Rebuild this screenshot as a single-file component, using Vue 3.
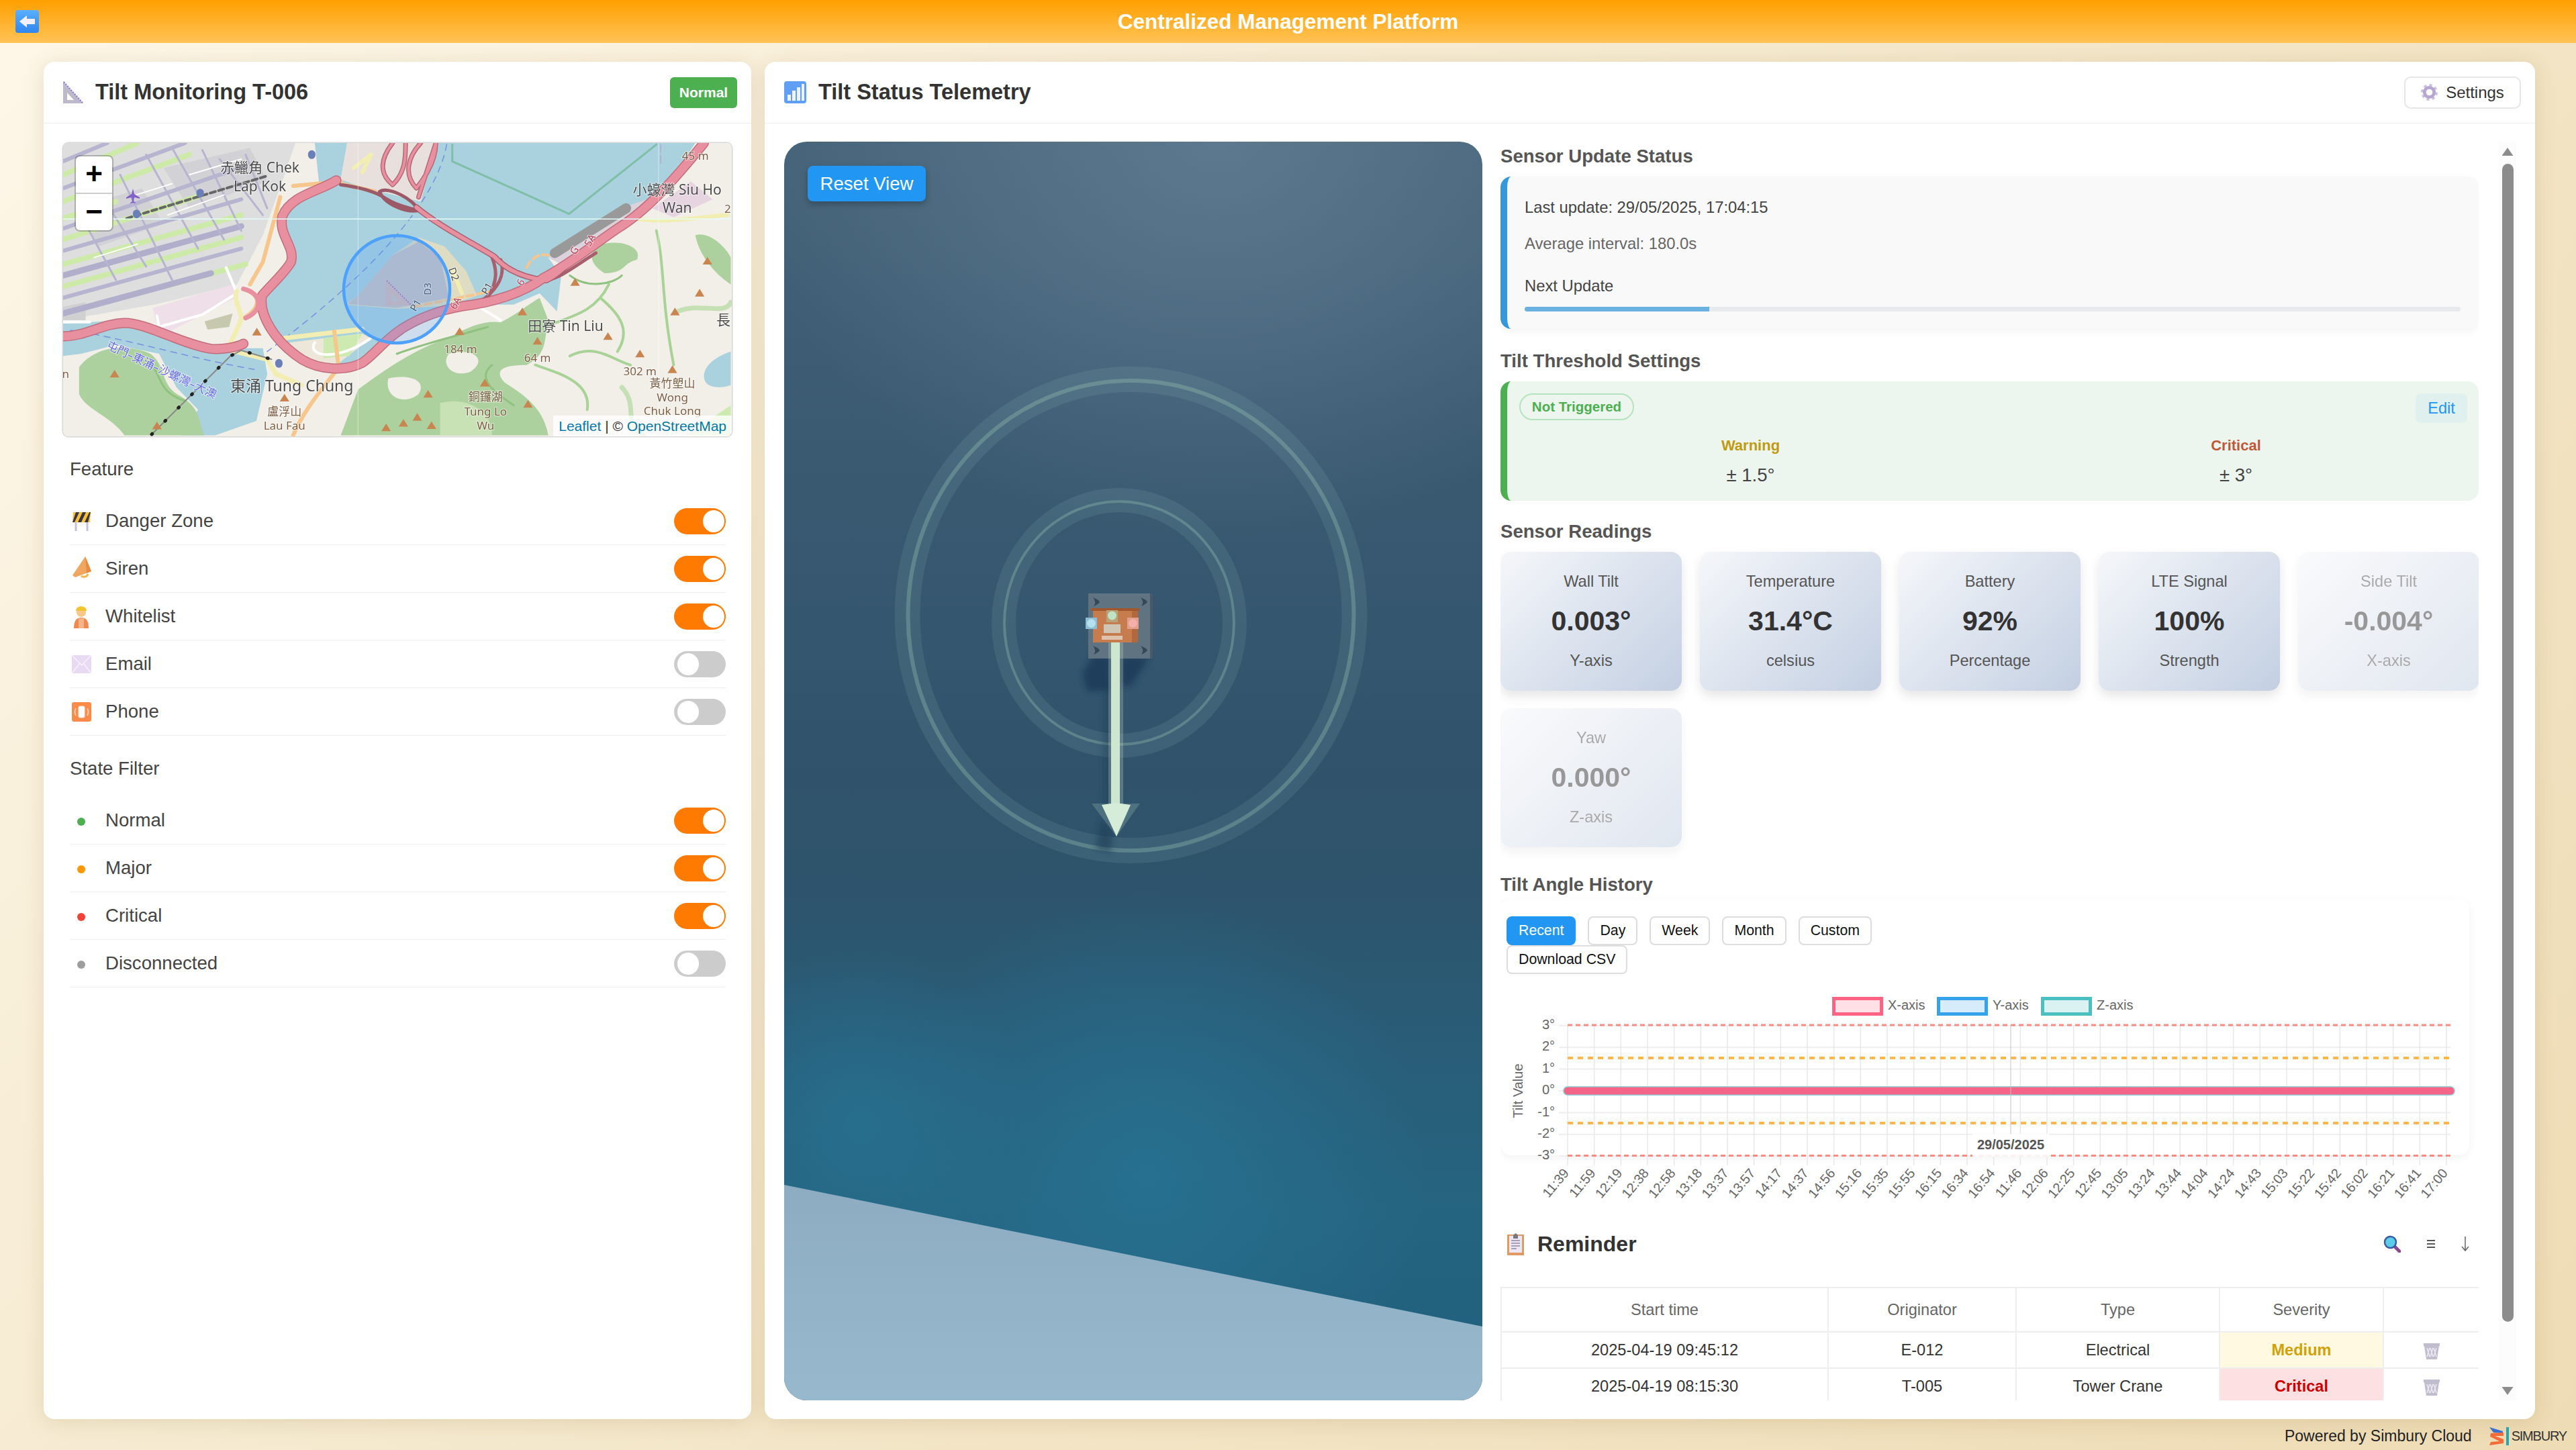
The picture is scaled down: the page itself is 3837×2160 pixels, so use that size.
<template>
  <div class="page">
    <header class="topbar">
      <button class="back-btn">
        <svg viewBox="0 0 35 34" width="35" height="34">
          <defs>
            <linearGradient id="backFill" x1="0" y1="0" x2="0" y2="1">
              <stop offset="0" stop-color="#5aaeff" />
              <stop offset="1" stop-color="#2f86ee" />
            </linearGradient>
          </defs>
          <rect width="35" height="34" rx="4" fill="url(#backFill)" />
          <path d="M6 17 L17 8 V13 H29 V21 H17 V26 Z" fill="#f2f0ff" />
        </svg>
      </button>
      <div class="topbar-title">Centralized Management Platform</div>
      <div></div>
    </header>

    <main class="main">
      <!-- left: site overview -->
      <section class="card left-card">
        <div class="card-head">
          <svg class="head-icon" viewBox="0 0 30 33" width="30" height="33">
            <path d="M0 0 L30 33 H0 Z M6 17 V28 H16 Z" fill="#bdb9cb" fill-rule="evenodd" />
            <path d="M1 1 L29 32" stroke="#8d70d8" stroke-width="2" stroke-dasharray="2 2" />
          </svg>
          <h2 class="card-title">Tilt Monitoring T-006</h2>
          <span class="status-badge">Normal</span>
        </div>
        <div class="left-body">
          <div class="map">
            <svg class="map-svg" viewBox="0 0 996 437" preserveAspectRatio="none">
              <rect width="996" height="437" fill="#f2efe9" />
              <g class="map-shapes" transform="scale(0.6441 0.3333) translate(-8 -8)">
                <path v-for="(s, i) in mapFills" :key="'f' + i" :d="s.d" :fill="s.c" />
                <path v-for="(s, i) in mapLines" :key="'l' + i" :d="s.d" fill="none" :stroke="s.c" :stroke-width="s.w"
                  :stroke-dasharray="s.dash" stroke-linecap="round" stroke-linejoin="round" />
                <path v-for="p in mapPeaks" :key="p[0] + '-' + p[1]"
                  :d="`M${p[0]},${p[1] - 18} l11,34 h-22 Z`" fill="#c9854f" />
                <path d="M8,348 H1552" stroke="#e6fbfb" stroke-width="1.5" />
                <path d="M690,8 V1315 M1385,8 V1315" stroke="#ffffff" stroke-opacity="0.5" stroke-width="1" />
              </g>
              <!-- plane -->
              <path d="M104 68 l2 8 8 5 v2 l-8 -2 -1 6 3 2 v1 l-4 -1 -4 1 v-1 l3 -2 -1 -6 -8 2 v-2 l8 -5 z" fill="#8461c9" />
              <text v-for="t in mapLabels" :key="t.text + t.x" class="map-label" :x="t.x" :y="t.y" :fill="t.c"
                :font-size="t.s" :transform="t.r ? `rotate(${t.r} ${t.x} ${t.y})` : null" text-anchor="middle"
                dominant-baseline="middle">{{ t.text }}</text>
              <ellipse cx="497" cy="218" rx="79" ry="80" fill="#3f97ff" fill-opacity="0.2" stroke="#4ea1fb"
                stroke-width="4.5" />
              <g transform="translate(481 204)">
                <path d="M0 0 L38 38 H0 Z M8 20 V32 H19 Z" fill="#b7b3c4" fill-opacity="0.9" fill-rule="evenodd" />
                <path d="M1 1 L37 37" stroke="#8d70d8" stroke-width="1.5" stroke-dasharray="2 2" />
              </g>
            </svg>
            <div class="zoom-ctl">
              <div class="zoom-btn">+</div>
              <div class="zoom-btn">−</div>
            </div>
            <div class="attribution"><span>Leaflet</span> | © <span>OpenStreetMap</span></div>
          </div>

          <h3 class="group-title">Feature</h3>
          <div v-for="f in features" :key="f.name" class="row">
            <span class="row-icon">
              <svg v-if="f.icon === 'zone'" viewBox="0 0 29 30" width="29" height="30">
                <path d="M6 16 V30 M23 16 V30" stroke="#c7bfdc" stroke-width="3" />
                <path d="M2 2 H28 L27 17 H1 Z" fill="#f5c23a" />
                <path d="M6 2 H11 L4 17 H1 Z M16 2 H21 L14 17 H9 Z M26 2 H28 L24 17 H19 Z" fill="#3b3346" />
              </svg>
              <svg v-else-if="f.icon === 'siren'" viewBox="0 0 29 36" width="29" height="36">
                <path d="M20 0 L29 22 L5 31 L1 28 Z" fill="#f0a560" />
                <path d="M20 0 L29 22 L22 25 Z" fill="#e58b42" />
                <path d="M14 29 a6 5 0 0 0 10 -3" fill="none" stroke="#f3b64e" stroke-width="3" />
              </svg>
              <svg v-else-if="f.icon === 'worker'" viewBox="0 0 26 36" width="26" height="36">
                <path d="M2 36 C2 24 6 20 13 20 C20 20 24 24 24 36 Z" fill="#f3884f" />
                <path d="M9 21 H17 V36 H9 Z" fill="#f6b38a" />
                <circle cx="13" cy="12" r="7" fill="#f7c889" />
                <path d="M5 10 C5 1 21 1 21 10 Z" fill="#f2c430" />
              </svg>
              <svg v-else-if="f.icon === 'mail'" viewBox="0 0 29 27" width="29" height="27">
                <rect width="29" height="27" fill="#e7daf2" />
                <path d="M0 0 L14.5 15 L29 0 M0 27 L12 12 M29 27 L17 12" fill="none" stroke="#f7f2fb" stroke-width="1.5" />
              </svg>
              <svg v-else viewBox="0 0 29 29" width="29" height="29">
                <rect width="29" height="29" rx="3" fill="#fb8b4a" />
                <rect x="10" y="6" width="9" height="17" rx="2" fill="#fff" stroke="#fde2cf" />
                <path d="M6 9 Q3 14.500 6 20 M23 9 Q26 14.500 23 20" fill="none" stroke="#fde2cf" stroke-width="1.500" />
              </svg>
            </span>
            <span class="row-name">{{ f.name }}</span>
            <span class="toggle" :class="{ on: f.on }"><i class="knob"></i></span>
          </div>

          <h3 class="group-title">State Filter</h3>
          <div v-for="s in states" :key="s.name" class="row">
            <span class="row-icon"><i class="dot" :style="{ background: s.color }"></i></span>
            <span class="row-name">{{ s.name }}</span>
            <span class="toggle" :class="{ on: s.on }"><i class="knob"></i></span>
          </div>
        </div>
      </section>

      <!-- right: telemetry -->
      <section class="card right-card">
        <div class="card-head">
          <svg class="head-icon" viewBox="0 0 33 33" width="33" height="33">
            <rect width="33" height="33" rx="4" fill="#5f9ff5" />
            <path d="M5 20 h5 v9 h-5z M12 14 h5 v15 h-5z M19 9 h5 v20 h-5z M26 4 h4 v25 h-4z" fill="#eef3ff" />
          </svg>
          <h2 class="card-title">Tilt Status Telemetry</h2>
          <button class="settings-btn">
            <svg viewBox="0 0 26 26" width="25" height="25">
              <circle cx="13" cy="13" r="10.500" fill="none" stroke="#cbbfe0" stroke-width="5" stroke-dasharray="4 4.200" />
              <circle cx="13" cy="13" r="7.500" fill="none" stroke="#b5a6d2" stroke-width="5" />
              <circle cx="13" cy="13" r="3.500" fill="#fff" />
            </svg>
            Settings
          </button>
        </div>

        <div class="right-body">
          <div class="viz">
            <svg class="viz-svg" viewBox="1168 211 1040 1875" preserveAspectRatio="none">
              <defs>
                <linearGradient id="floorFill" x1="0" y1="0" x2="0" y2="1">
                  <stop offset="0" stop-color="#8dacc2" />
                  <stop offset="1" stop-color="#97b8cd" />
                </linearGradient>
                <filter id="soft" x="-50%" y="-50%" width="200%" height="200%">
                  <feGaussianBlur stdDeviation="5" />
                </filter>
              </defs>
              <polygon points="1168,1765 2208,1976 2208,2086 1168,2086" fill="url(#floorFill)" />

              <ellipse cx="1684.500" cy="916" rx="333" ry="351" fill="none" stroke="#9cc4c4" stroke-opacity="0.13" stroke-width="38" />
              <ellipse cx="1684.500" cy="917" rx="332" ry="350" fill="none" stroke="#a7d2bb" stroke-opacity="0.3" stroke-width="6" />
              <ellipse cx="1667" cy="928" rx="172" ry="183" fill="none" stroke="#9cc4c4" stroke-opacity="0.13" stroke-width="36" />
              <ellipse cx="1667" cy="928" rx="171" ry="181" fill="none" stroke="#a7d2bb" stroke-opacity="0.3" stroke-width="4" />

              <g fill="#1a3a55" fill-opacity="0.8" filter="url(#soft)">
                <path d="M1628 975 L1612 1005 L1620 1030 L1655 1028 L1655 975 Z" />
                <path d="M1670 978 H1712 L1685 1022 H1670 Z" />
                <rect x="1645" y="1020" width="10" height="190" fill-opacity="0.45" />
                <path d="M1640 1220 L1658 1235 L1655 1270 L1632 1265 Z" fill-opacity="0.6" />
              </g>

              <rect x="1621" y="884" width="92" height="97" fill="#5f7480" />
              <rect x="1713" y="884" width="4" height="97" fill="#47586a" />
              <path v-for="b in bolts" :key="b[0] + '' + b[1]" :transform="`translate(${b[0]} ${b[1]})`"
                d="M0 0 Q10 4 10 7 Q8 10 1 13 Q6 7 0 0 Z" fill="#35485a" />

              <rect x="1628" y="907" width="67" height="50" fill="#c67c4c" />
              <rect x="1686" y="907" width="9" height="50" fill="#b2683b" />
              <rect x="1625" y="906" width="72" height="4" fill="#a2562c" />
              <rect x="1648" y="909" width="17" height="18" fill="#b8a37a" />
              <circle cx="1656.500" cy="917" r="6.500" fill="#bfe3c3" />
              <rect x="1617" y="920" width="17" height="17" fill="#8ebdd4" />
              <circle cx="1625.500" cy="928.500" r="6.500" fill="#b5e0f0" />
              <rect x="1679" y="920" width="17" height="17" fill="#e0a08c" />
              <circle cx="1687.500" cy="928.500" r="6.500" fill="#f2b0a8" />
              <rect x="1644" y="930" width="25" height="13" fill="#cfc6b6" />
              <rect x="1641" y="947" width="31" height="6" fill="#dfc3aa" />

              <rect x="1651" y="957" width="22" height="243" fill="#cfe9d3" fill-opacity="0.25" />
              <rect x="1655" y="957" width="13" height="243" fill="#cde6d0" />
              <polygon points="1626,1197 1698,1197 1663,1246" fill="#cfe9d3" fill-opacity="0.2" />
              <polygon points="1641,1199 1662,1196 1684,1199 1663,1246" fill="#d5ecd8" />
            </svg>
            <button class="reset-btn">Reset View</button>
          </div>

          <div class="details">
            <h3 class="sec-title first">Sensor Update Status</h3>
            <div class="status-box">
              <div class="status-line dark">Last update: 29/05/2025, 17:04:15</div>
              <div class="status-line">Average interval: 180.0s</div>
              <div class="status-line dark next">Next Update</div>
              <div class="progress"><div class="progress-fill" :style="{ width: progress + '%' }"></div></div>
            </div>

            <h3 class="sec-title">Tilt Threshold Settings</h3>
            <div class="threshold-box">
              <div class="threshold-head">
                <span class="trigger-badge">Not Triggered</span>
                <button class="edit-btn">Edit</button>
              </div>
              <div class="threshold-cols">
                <div v-for="t in thresholds" :key="t.label" class="threshold-col">
                  <div class="threshold-label" :style="{ color: t.color }">{{ t.label }}</div>
                  <div class="threshold-value">{{ t.value }}</div>
                </div>
              </div>
            </div>

            <h3 class="sec-title readings-title">Sensor Readings</h3>
            <div class="readings">
              <div v-for="r in readings" :key="r.label" class="reading" :class="{ dim: r.dim }">
                <div class="reading-label">{{ r.label }}</div>
                <div class="reading-value">{{ r.value }}</div>
                <div class="reading-sub">{{ r.sub }}</div>
              </div>
            </div>

            <h3 class="sec-title history">Tilt Angle History</h3>
            <div class="chart-box">
              <div class="range-btns">
                <button v-for="b in ranges" :key="b" class="range-btn" :class="{ active: b === 'Recent' }">{{ b }}</button>
              </div>
              <svg class="chart" viewBox="2235 1470 1443 340" width="1443" height="340">
                <g v-for="l in legend" :key="l.text">
                  <rect :x="l.x + 2.500" y="1484.500" width="71" height="23" :fill="l.fill" :stroke="l.color" stroke-width="5" />
                  <text class="legend-text" :x="l.x + 83" y="1496" dominant-baseline="middle">{{ l.text }}</text>
                </g>
                <line v-for="y in yTicks" :key="'g' + y.v" x1="2322" x2="3650" :y1="y.y" :y2="y.y" stroke="#eeeeee" stroke-width="2" />
                <line v-for="t in xTicks" :key="'v' + t.label + t.x" :x1="t.x" :x2="t.x" y1="1524" y2="1733" stroke="#e8e8e8" stroke-width="1.500" />
                <text v-for="y in yTicks" :key="'y' + y.v" class="tick" x="2316" :y="y.y" text-anchor="end" dominant-baseline="middle">{{ y.v }}°</text>
                <text v-for="t in xTicks" :key="'x' + t.label + t.x" class="tick" :x="t.x + 3" y="1745" text-anchor="end"
                  :transform="`rotate(-50 ${t.x + 3} 1745)`">{{ t.label }}</text>
                <text class="axis-title" transform="translate(2268 1622) rotate(-90)" text-anchor="middle">Tilt Value</text>

                <line v-for="y in [1524, 1718.500]" :key="y" x1="2335" x2="3650" :y1="y" :y2="y" stroke="#ff8a80" stroke-width="3" stroke-dasharray="7 5" />
                <line v-for="y in [1573, 1670]" :key="y" x1="2335" x2="3650" :y1="y" :y2="y" stroke="#ffb74d" stroke-width="4" stroke-dasharray="8 7" />

                <line x1="2335" x2="3650" y1="1622" y2="1622" stroke="#8fd3d8" stroke-width="14" stroke-linecap="round" />
                <line x1="2335" x2="3650" y1="1622" y2="1622" stroke="#f7648a" stroke-width="11" stroke-linecap="round" />
                <line x1="2995" x2="2995" y1="1524" y2="1690" stroke="#c4c4c4" stroke-width="1" />

                <rect x="2938" y="1686" width="114" height="34" fill="#ffffff" fill-opacity="0.88" />
                <text class="date-tag" x="2995" y="1704" text-anchor="middle" dominant-baseline="middle">29/05/2025</text>
              </svg>
            </div>

            <div class="reminder-head">
              <svg viewBox="0 0 25 33" width="25" height="33">
                <rect y="2" width="25" height="31" fill="#e09a64" />
                <rect x="3" y="4" width="19" height="25" fill="#ece6f5" />
                <path d="M6 11 H19 M6 15 H19 M6 19 H19 M6 23 H14" stroke="#8f8aa0" stroke-width="1.500" />
                <path d="M9 8 V3 L12.500 0 L16 3 V8 Z" fill="#777780" />
              </svg>
              <h2 class="reminder-title">Reminder</h2>
              <div class="reminder-tools">
                <svg viewBox="0 0 26 26" width="26" height="26">
                  <path d="M16 16 L24 24" stroke="#8a4a90" stroke-width="5" stroke-linecap="round" />
                  <circle cx="10.500" cy="10.500" r="8.500" fill="#5bcdea" stroke="#3a5ca0" stroke-width="2.500" />
                </svg>
                <svg viewBox="0 0 14 14" width="14" height="14">
                  <path d="M1 2 H13 M1 7 H13 M1 12 H13" stroke="#555555" stroke-width="2" />
                </svg>
                <svg viewBox="0 0 12 24" width="12" height="24">
                  <path d="M6 1 V22 M1 16 L6 22 L11 16" fill="none" stroke="#666666" stroke-width="1.500" />
                </svg>
              </div>
            </div>

            <table class="reminder-table">
              <colgroup>
                <col v-for="w in colWidths" :key="w" :style="{ width: w + 'px' }" />
              </colgroup>
              <thead>
                <tr>
                  <th v-for="h in tableHead" :key="h">{{ h }}</th>
                </tr>
              </thead>
              <tbody>
                <tr v-for="r in reminders" :key="r.time">
                  <td>{{ r.time }}</td>
                  <td>{{ r.origin }}</td>
                  <td>{{ r.type }}</td>
                  <td class="sev" :class="r.severity.toLowerCase()">{{ r.severity }}</td>
                  <td>
                    <svg class="bin" viewBox="0 0 26 24" width="26" height="24">
                      <path d="M1 0 H25 V4 H24 L21 24 H5 L2 4 H1 Z" fill="#c1bdce" />
                      <path d="M6 7 L10 20 M11 7 L15 20 M16 7 L20 20 M20 7 L16 20 M15 7 L11 20 M10 7 L6 20" stroke="#ebe9f1" stroke-width="1.500" />
                    </svg>
                  </td>
                </tr>
              </tbody>
            </table>
          </div>

          <div class="scrollbar">
            <i class="arrow up"></i>
            <div class="thumb"></div>
            <i class="arrow down"></i>
          </div>
        </div>
      </section>
    </main>

    <footer class="footer">
      <span>Powered by Simbury Cloud</span>
      <svg viewBox="0 0 29 27" width="29" height="27">
        <path d="M0 0 L20 6 L20 9 L6 8 Z" fill="#3b6fd0" />
        <path d="M2 9 L21 8 L21 13 L8 13 L21 18 L21 24 L0 27 L2 22 L15 21 L1 14 Z" fill="#f26b38" />
        <rect x="25" y="0" width="4" height="27" fill="#22a7b5" />
      </svg>
      <span class="brand">SIMBURY</span>
    </footer>
  </div>
</template>

<script setup>
const features = [
  { name: 'Danger Zone', icon: 'zone', on: true },
  { name: 'Siren', icon: 'siren', on: true },
  { name: 'Whitelist', icon: 'worker', on: true },
  { name: 'Email', icon: 'mail', on: false },
  { name: 'Phone', icon: 'phone', on: false }
]

const states = [
  { name: 'Normal', color: '#4caf50', on: true },
  { name: 'Major', color: '#ff9800', on: true },
  { name: 'Critical', color: '#f44336', on: true },
  { name: 'Disconnected', color: '#9e9e9e', on: false }
]

const progress = 19.7

const thresholds = [
  { label: 'Warning', value: '± 1.5°', color: '#c09a10' },
  { label: 'Critical', value: '± 3°', color: '#c0573a' }
]

const readings = [
  { label: 'Wall Tilt', value: '0.003°', sub: 'Y-axis' },
  { label: 'Temperature', value: '31.4°C', sub: 'celsius' },
  { label: 'Battery', value: '92%', sub: 'Percentage' },
  { label: 'LTE Signal', value: '100%', sub: 'Strength' },
  { label: 'Side Tilt', value: '-0.004°', sub: 'X-axis', dim: true },
  { label: 'Yaw', value: '0.000°', sub: 'Z-axis', dim: true }
]

const ranges = ['Recent', 'Day', 'Week', 'Month', 'Custom', 'Download CSV']

const legend = [
  { text: 'X-axis', x: 2729, color: '#ff6384', fill: '#ffe0e6' },
  { text: 'Y-axis', x: 2885, color: '#36a2eb', fill: '#d7ecfb' },
  { text: 'Z-axis', x: 3040, color: '#4bc0c0', fill: '#dbf2f2' }
]

// chart scale: 32.4px per degree, zero at y=1622
const yTicks = [3, 2, 1, 0, -1, -2, -3].map(v => ({ v, y: 1622 - v * 32.4 }))

const timeLabels = ['11:39', '11:59', '12:19', '12:38', '12:58', '13:18', '13:37', '13:57', '14:17', '14:37', '14:56', '15:16',
  '15:35', '15:55', '16:15', '16:34', '16:54', '11:46', '12:06', '12:25', '12:45', '13:05', '13:24', '13:44', '14:04', '14:24',
  '14:43', '15:03', '15:22', '15:42', '16:02', '16:21', '16:41', '17:00']
const xTicks = timeLabels.map((label, i) => ({ label, x: 2335 + i * (3644 - 2335) / 33 }))

const tableHead = ['Start time', 'Originator', 'Type', 'Severity', '']
const colWidths = [487, 280, 303, 244, 143]
const reminders = [
  { time: '2025-04-19 09:45:12', origin: 'E-012', type: 'Electrical', severity: 'Medium' },
  { time: '2025-04-19 08:15:30', origin: 'T-005', type: 'Tower Crane', severity: 'Critical' }
]

const bolts = [[1628, 890], [1699, 890], [1628, 962], [1699, 962]]

// map shapes, traced in a 1552x1315 space and scaled down by the group transform
const water = '#a9d1de'
const ringRoad = 'M640,175 C600,225 535,240 515,335 C505,420 545,470 535,540 C520,590 490,640 468,690 C460,780 500,900 560,975 C600,1022 660,1030 700,990 C730,950 745,900 790,840 C830,790 880,755 930,738 C1000,722 1070,680 1120,610 C1170,560 1230,470 1290,390 C1350,320 1410,200 1490,8'
const westRoad = 'M8,872 C60,872 100,815 150,812 C200,812 280,905 350,928 C380,932 410,920 425,905'
const bridge = 'M825,295 C870,370 950,450 1005,515 C1030,570 1070,610 1125,622 C1150,600 1170,560 1190,520'

const mapFills = [
  { c: water, d: 'M590,8 L665,8 L650,170 L700,205 L835,270 L870,8 L1470,8 L1390,240 L1300,300 L1200,430 L1130,520 L1160,600 L1150,760 L1110,680 L1050,730 L970,730 L900,740 L830,780 L745,890 L700,980 L640,1020 L570,980 L500,880 L470,780 L460,690 L500,650 L545,520 L510,430 L510,330 L540,250 L600,190 Z' },
  { c: water, d: 'M8,815 L150,800 L350,925 L470,925 L480,1040 L455,1250 L360,1315 L280,1315 L320,1200 L270,1100 L230,950 L130,910 L50,950 L8,960 Z' },
  { c: water, d: 'M1552,940 L1552,1090 C1520,1110 1490,1100 1490,1050 C1490,1000 1520,960 1552,940 Z' },
  { c: '#dededf', d: 'M8,8 L545,8 L520,150 L470,420 L410,640 L220,730 L8,800 Z' },
  { c: '#d2d2d6', d: 'M240,120 L440,30 L480,180 L300,300 Z' },
  { c: '#d2d2d6', d: 'M40,300 L190,210 L240,370 L90,470 Z' },
  { c: '#efdfe8', d: 'M215,745 L400,640 L412,695 L245,860 L222,800 Z' },
  { c: '#c6c9ae', d: 'M335,805 L400,770 L392,830 L342,842 Z' },
  { c: '#d0cfd2', d: 'M8,740 L60,720 L60,800 L8,800 Z' },
  { c: '#e8e0dc', d: 'M665,8 L870,8 L835,270 L700,205 L650,170 Z' },
  { c: '#dedcc2', d: 'M830,430 L890,470 L940,580 L965,690 L900,735 L780,750 L660,730 L690,690 L770,510 Z' },
  { c: '#c7c4c6', d: 'M770,510 L830,450 L880,520 L900,700 L780,745 L665,728 L690,690 Z' },
  { c: '#dcd2dc', d: 'M1130,520 L1300,300 L1400,230 L1350,320 L1290,390 L1170,560 Z' },
  { c: '#e6d5e0', d: 'M1370,300 L1460,180 L1510,260 L1420,340 Z' },
  { c: '#add19e', d: 'M45,1010 C80,920 150,900 210,950 C250,1010 230,1090 280,1140 C330,1200 320,1260 335,1315 L150,1315 C120,1230 60,1200 45,1130 Z' },
  { c: '#add19e', d: 'M690,1110 C760,1010 830,920 900,880 C950,820 990,800 1020,810 C1060,770 1090,720 1110,700 L1130,800 C1120,880 1130,950 1080,1000 C1030,1000 1000,1020 1030,1080 C1080,1140 1120,1200 1130,1315 L650,1315 Z' },
  { c: '#f2efe9', d: 'M760,1060 C810,1040 850,1070 830,1130 C800,1180 750,1150 760,1060 Z' },
  { c: '#f2efe9', d: 'M900,950 C960,920 990,980 950,1030 C910,1060 880,1000 900,950 Z' },
  { c: '#c8e2b6', d: 'M880,1170 C940,1140 1000,1200 1000,1315 L880,1315 Z' },
  { c: '#add19e', d: 'M1240,470 C1290,430 1350,470 1335,530 C1300,545 1310,590 1260,590 C1235,560 1220,520 1240,470 Z' },
  { c: '#add19e', d: 'M1470,420 C1500,400 1540,470 1552,520 L1552,640 C1520,600 1480,520 1470,420 Z' },
  { c: '#cdebb0', d: 'M1450,1315 L1552,1180 L1552,1315 Z' },
  { c: '#ece7d9', d: 'M530,900 L700,860 L720,880 L640,1000 L560,970 Z' },
  { c: '#cdebb0', d: 'M610,880 L700,860 L670,960 L610,970 Z' }
]

const mapLines = [
  // airport aprons and taxiways
  { c: '#cdeaa9', w: 8, d: 'M8,150 L180,8 M8,270 L300,60 M8,440 L330,240 M8,550 L420,330 M8,650 L420,430 M8,345 L130,270 M260,640 L430,550' },
  { c: '#b6b4cf', w: 6, d: 'M8,90 L110,8 M8,210 L290,8 M8,390 L430,110 M8,490 L420,260 M8,700 L420,480' },
  { c: '#b0aecb', w: 9, d: 'M8,600 L420,380 M8,770 L350,590' },
  { c: '#b6b4cf', w: 3, d: 'M200,60 L320,480 M330,40 L420,400 M90,220 L200,560 M430,60 L480,300 M140,150 L260,620 M260,30 L380,440 M40,300 L130,620 M370,80 L470,330' },
  { c: '#ffffff', w: 2, d: 'M160,250 L260,190 M250,330 L380,240 M300,150 L420,80 M80,520 L180,460' },
  { c: '#666666', w: 4, dash: '8 5', d: 'M155,345 L480,155' },
  // ferries and boundaries
  { c: '#7a8fe0', w: 1.5, dash: '9 8', d: 'M895,15 C880,180 800,480 480,940' },
  { c: '#7a8fe0', w: 1.5, dash: '9 8', d: 'M25,845 C150,880 300,970 450,1020' },
  { c: '#7fbfa8', w: 3, d: 'M908,15 L908,90 L1178,325 L1380,15' },
  { c: '#b6a9cf', w: 1.5, dash: '12 4', d: 'M1390,15 V110' },
  // contour greens
  { c: '#a9d296', w: 4, d: 'M1380,400 C1400,560 1390,700 1420,1000 M1250,700 C1300,780 1320,850 1290,940 M1100,1000 C1160,1040 1230,1080 1220,1200 M1120,830 C1190,780 1240,760 1270,640 M1180,960 C1240,900 1280,980 1320,1000' },
  { c: '#8fc27f', w: 3, d: 'M200,980 C240,1030 220,1120 290,1160 M780,950 C850,900 920,870 990,830 M1000,1000 C960,1060 1010,1130 1050,1180 M1180,600 C1220,660 1280,640 1300,600' },
  { c: '#c5e0b4', w: 7, d: 'M1430,760 C1480,720 1540,780 1552,720 M1300,1100 C1340,1180 1300,1260 1350,1315' },
  { c: '#999999', w: 15, d: 'M1145,500 L1310,300' },
  // service roads
  { c: '#ffffff', w: 4, d: 'M385,565 L410,680 L330,775 L230,830 L225,780 M8,808 L70,808 M590,900 C570,960 640,990 720,880 M965,735 L1020,800' },
  { c: '#f2eeb2', w: 7, d: 'M520,880 L700,840 M410,670 C400,700 420,760 420,790 C415,830 400,880 390,920 M395,935 L480,975 L500,1040 L560,1090' },
  { c: '#f2eeb2', w: 6, d: 'M1330,345 C1400,370 1470,340 1545,330 M910,580 L930,680 M680,120 L720,60 L700,140' },
  { c: '#f7c68c', w: 6, d: 'M635,850 L645,1010 C620,1080 570,1180 540,1315 M510,250 L470,540 L440,640 M430,665 C470,690 460,750 430,785 M540,200 L650,180 M650,190 L730,225' },
  { c: '#f7c68c', w: 4, dash: '10 6', d: 'M820,740 L1000,670 M1080,565 C1090,520 1110,500 1130,510' },
  // motorways: casing then fill
  { c: '#c26d7d', w: 15, d: ringRoad },
  { c: '#c26d7d', w: 15, d: westRoad },
  { c: '#a8606e', w: 9, d: bridge },
  { c: '#a8606e', w: 5, d: 'M1000,520 C1010,570 1015,620 990,700 M1020,530 C1030,590 1020,650 975,715 M1125,622 C1160,610 1190,560 1240,500' },
  { c: '#b56878', w: 7, d: 'M770,8 C745,70 735,140 770,195 C800,140 800,70 800,8 M835,8 C805,70 795,150 825,210 C850,150 870,80 870,8 M870,8 L830,250' },
  { c: '#9c5a68', w: 5, d: 'M650,195 C690,205 720,220 745,245 C780,290 810,300 830,310 M740,225 C760,200 820,260 830,310 C800,320 750,280 740,225 Z' },
  { c: '#e8909f', w: 12, d: ringRoad },
  { c: '#e8909f', w: 12, d: westRoad },
  { c: '#e8909f', w: 6, d: bridge },
  { c: '#e8909f', w: 4, d: 'M770,8 C745,70 735,140 770,195 C800,140 800,70 800,8 M835,8 C805,70 795,150 825,210 C850,150 870,80 870,8 M870,8 L830,250' },
  { c: '#e8909f', w: 7, d: 'M425,660 C470,680 470,760 430,790' },
  // railway
  { c: '#888888', w: 2, d: 'M213,1310 L395,960 L420,935 L490,975' },
  { c: '#222222', w: 5, dash: '1 27', d: 'M213,1310 L395,960 L420,935 L490,975' },
  // square markers
  { c: '#6a7fb8', w: 11, d: 'M178,322 V328 M325,229 V235 M583,57 V63 M507,990 V996' }
]

const mapPeaks = [[456, 852], [127, 1040], [520, 1147], [225, 1272], [925, 850], [1105, 893], [1070, 762], [1192, 630], [1268, 872],
  [1342, 950], [1417, 1020], [1423, 762], [1480, 678], [1498, 535], [983, 1080], [852, 1130], [1083, 1175], [827, 1233], [795, 1260],
  [755, 1280], [860, 1270]]

const ink = '#4c4c4c'
const brown = '#7d5f45'
const rawLabels = [
  ['赤鱲角 Chek', 463, 122, 21, ink], ['Lap Kok', 463, 207, 21, ink], ['小蠔灣 Siu Ho', 1428, 222, 21, ink], ['Wan', 1428, 303, 21, ink],
  ['45 m', 1470, 70, 17, brown], ['東涌 Tung Chung', 537, 1100, 23, ink], ['田寮 Tin Liu', 1170, 830, 21, ink],
  ['184 m', 927, 932, 17, brown], ['64 m', 1105, 972, 17, brown], ['302 m', 1342, 1033, 17, brown], ['黃竹塱山', 1417, 1085, 17, brown],
  ['Wong', 1417, 1150, 17, brown], ['Chuk Long', 1417, 1210, 17, brown], ['銅鑼湖', 985, 1145, 17, brown], ['Tung Lo', 985, 1212, 17, brown],
  ['Wu', 985, 1275, 17, brown], ['盧浮山', 520, 1212, 17, brown], ['Lau Fau', 520, 1275, 17, brown], ['長', 1535, 805, 21, ink],
  ['n', 14, 1045, 17, brown], ['2', 1545, 305, 17, brown], ['6A', 917, 725, 15, '#b8384f', -60], ['5A', 1228, 445, 15, '#b8384f', -60],
  ['G', 1192, 490, 15, '#b8384f', -60], ['6', 1068, 632, 15, '#b8384f', -60], ['P1', 990, 660, 15, ink, -60], ['P1', 825, 735, 15, ink, -60],
  ['D2', 910, 595, 15, ink, 70], ['D3', 853, 660, 14, ink, -90], ['屯門–東涌–沙螺灣–大澳', 235, 1025, 17, '#6a6ae8', 25]
]
// convert traced coordinates to real map pixels
const mapLabels = rawLabels.map(([text, zx, zy, s, c, r]) => ({ text, x: (zx - 8) * 0.6441, y: (zy - 8) / 3, s, c, r }))
</script>

<style scoped>
.page {
  width: 100%;
  height: 2160px;
  display: flex;
  flex-direction: column;
  overflow: hidden;
  background: linear-gradient(135deg, #fdf7e8 0%, #f3e6c8 55%, #eedcb5 100%);
  font-family: "Liberation Sans", Arial, sans-serif;
  color: #333;
}

.topbar {
  height: 64px;
  flex: none;
  display: grid;
  grid-template-columns: 1fr auto 1fr;
  align-items: center;
  padding: 0 23px;
  background: linear-gradient(180deg, #ff9f00 0%, #ffc356 100%);
}

.back-btn {
  width: 35px;
  height: 34px;
  padding: 0;
  border: none;
  background: none;
  display: block;
  justify-self: start;
}

.back-btn svg {
  display: block;
}

.topbar-title {
  color: #fff;
  font-size: 31.5px;
  font-weight: 700;
}

.main {
  flex: 1;
  min-height: 0;
  display: flex;
  gap: 20px;
  padding: 28px 61px 0 65px;
}

.card {
  background: #fff;
  border-radius: 16px;
  box-shadow: 0 4px 30px rgba(130, 95, 30, 0.16);
  display: flex;
  flex-direction: column;
  min-height: 0;
}

.left-card {
  width: 1054px;
  flex: none;
}

.right-card {
  flex: 1;
  min-width: 0;
}

.card-head {
  height: 92px;
  flex: none;
  display: flex;
  align-items: center;
  padding: 0 21px 0 29px;
  border-bottom: 1.5px solid #eeeeee;
  box-sizing: border-box;
}

.head-icon {
  flex: none;
  margin-right: 18px;
}

.card-title {
  margin: 0;
  font-size: 32.5px;
  font-weight: 700;
  color: #333;
}

.status-badge {
  margin-left: auto;
  width: 100px;
  height: 46px;
  line-height: 46px;
  text-align: center;
  border-radius: 6px;
  background: #4caf50;
  color: #fff;
  font-size: 21px;
  font-weight: 700;
}

.left-body {
  padding: 29px 29px 0;
}

.map {
  position: relative;
  width: 996px;
  height: 437px;
  border-radius: 8px;
  overflow: hidden;
  box-shadow: 0 0 0 1.5px #d8d8d8;
}

.map-svg {
  display: block;
  width: 100%;
  height: 100%;
  filter: blur(0.6px);
}

.map-shapes * {
  vector-effect: non-scaling-stroke;
}

.map-label {
  font-family: "Noto Sans", "Noto Sans CJK TC", sans-serif;
  paint-order: stroke;
  stroke: rgba(255, 255, 255, 0.6);
  stroke-width: 2px;
}

.zoom-ctl {
  position: absolute;
  left: 19px;
  top: 20px;
  width: 54px;
  border-radius: 6px;
  background: #fff;
  box-shadow: 0 0 0 2px rgba(0, 0, 0, 0.22);
}

.zoom-btn {
  height: 54px;
  line-height: 52px;
  text-align: center;
  font-size: 44px;
  font-weight: 700;
  color: #000;
}

.zoom-btn:first-child {
  border-bottom: 2px solid #ccc;
}

.attribution {
  position: absolute;
  right: 0;
  bottom: 0;
  height: 31px;
  line-height: 31px;
  padding: 0 8px 0 8px;
  background: rgba(255, 255, 255, 0.8);
  font-size: 21px;
  color: #333;
}

.attribution span {
  color: #0078a8;
}

.group-title {
  margin: 33px 0 26px 10px;
  font-size: 27.6px;
  line-height: 32px;
  font-weight: 400;
  color: #444;
}

.row {
  height: 71px;
  margin: 0 9px 0 10px;
  display: flex;
  align-items: center;
  box-sizing: border-box;
  border-bottom: 1.5px solid #eeeeee;
}

.row-icon {
  width: 34px;
  margin-right: 19px;
  flex: none;
  display: flex;
  justify-content: center;
  align-items: center;
}

.row-name {
  font-size: 27.6px;
  color: #444;
}

.dot {
  width: 12px;
  height: 12px;
  margin-top: 3px;
  border-radius: 50%;
}

.toggle {
  margin-left: auto;
  width: 77px;
  height: 39px;
  box-sizing: border-box;
  padding: 0 5px;
  border-radius: 20px;
  background: #ccc;
  display: flex;
  align-items: center;
}

.toggle.on {
  background: #ff7a00;
  justify-content: flex-end;
  padding: 0 2px;
}

.knob {
  width: 32px;
  height: 33px;
  border-radius: 50%;
  background: #fff;
}

.settings-btn {
  margin-left: auto;
  width: 174px;
  height: 48px;
  display: flex;
  align-items: center;
  justify-content: center;
  gap: 12px;
  border: 2px solid #e6e6e6;
  border-radius: 10px;
  background: #fff;
  color: #333;
  font-family: inherit;
  font-size: 24px;
}

.right-body {
  flex: 1;
  min-height: 0;
  display: flex;
  padding: 27px 28px 28px 29px;
}

.viz {
  position: relative;
  width: 1040px;
  flex: none;
  margin-right: 27px;
  border-radius: 34px;
  overflow: hidden;
  background:
    radial-gradient(circle at 52% 82%, rgba(39, 114, 146, 0.85) 0, rgba(39, 112, 143, 0) 420px),
    radial-gradient(circle at 11% 78%, rgba(39, 114, 146, 0.8) 0, rgba(39, 112, 143, 0) 260px),
    radial-gradient(ellipse 700px 600px at 62% 0, rgba(100, 128, 150, 0.75) 0, rgba(100, 128, 150, 0) 100%),
    linear-gradient(180deg, #456378 0%, #3a5a72 25%, #30536b 50%, #2d546c 60%, #295d78 72%, #256480 85%, #20607e 100%);
}

.viz-svg {
  display: block;
  width: 100%;
  height: 100%;
}

.reset-btn {
  position: absolute;
  left: 35px;
  top: 36px;
  width: 176px;
  height: 53px;
  border: none;
  border-radius: 8px;
  background: #2196f3;
  color: #fff;
  font-family: inherit;
  font-size: 27.6px;
  box-shadow: 0 4px 10px rgba(0, 0, 0, 0.25);
}

.details {
  width: 1457px;
  flex: none;
  overflow: hidden;
}

.sec-title {
  margin: 32px 0 14px;
  font-size: 27.6px;
  line-height: 32px;
  font-weight: 700;
  color: #555;
}

.sec-title.first {
  margin-top: 6px;
}

.sec-title.readings-title {
  margin-top: 30px;
}

.sec-title.history {
  margin: 40px 0 5px;
}

.status-box {
  border-left: 10px solid #3498db;
  border-radius: 16px;
  background: #f9f9f9;
  box-shadow: 0 4px 12px rgba(0, 0, 0, 0.05);
  padding: 32px 27px 26px 26px;
}

.status-line {
  font-size: 23.8px;
  line-height: 28px;
  color: #666;
  margin-bottom: 26px;
}

.status-line.dark {
  color: #444;
}

.status-line.next {
  margin: 35px 0 17px;
}

.progress {
  height: 7px;
  border-radius: 4px;
  background: #e6eaec;
  overflow: hidden;
}

.progress-fill {
  height: 100%;
  background: #6ab0e0;
}

.threshold-box {
  border-left: 10px solid #4caf50;
  border-radius: 16px;
  background: #edf6ee;
  padding: 18px 17px 24px 18px;
}

.threshold-head {
  display: flex;
  justify-content: space-between;
  align-items: flex-start;
}

.trigger-badge {
  width: 171px;
  height: 40px;
  line-height: 36px;
  box-sizing: border-box;
  text-align: center;
  border: 2px solid #b5e3bd;
  border-radius: 20px;
  color: #4caf50;
  font-size: 20.5px;
  font-weight: 700;
}

.edit-btn {
  width: 77px;
  height: 44px;
  border: none;
  border-radius: 8px;
  background: #e0f0ef;
  color: #2196f3;
  font-family: inherit;
  font-size: 23.6px;
}

.threshold-cols {
  display: grid;
  grid-template-columns: 1fr 1fr;
  gap: 34px;
  margin-top: 20px;
  text-align: center;
}

.threshold-label {
  font-size: 22px;
  line-height: 28px;
  font-weight: 700;
}

.threshold-value {
  margin-top: 16px;
  font-size: 27.6px;
  line-height: 28px;
  color: #444;
}

.readings {
  display: grid;
  grid-template-columns: repeat(5, 270px);
  gap: 26px 27px;
}

.reading {
  height: 207px;
  box-sizing: border-box;
  padding-top: 30px;
  border-radius: 16px;
  text-align: center;
  background: linear-gradient(135deg, #f5f7fa 0%, #c3cfe2 100%);
  box-shadow: 0 8px 16px rgba(0, 0, 0, 0.1);
}

.reading.dim {
  opacity: 0.5;
}

.reading-label,
.reading-sub {
  font-size: 23.6px;
  line-height: 28px;
  color: #555;
}

.reading-value {
  margin: 21px 0;
  font-size: 41px;
  line-height: 48px;
  font-weight: 700;
  color: #333;
}

.chart-box {
  height: 382px;
  box-sizing: border-box;
  padding: 26px 0 0 9px;
  margin-right: 14px;
  border-radius: 16px;
  box-shadow: 0 4px 14px rgba(0, 0, 0, 0.05);
}

.range-btns {
  width: 600px;
  display: flex;
  flex-wrap: wrap;
  column-gap: 18px;
}

.range-btn {
  height: 43px;
  padding: 0 16px;
  border: 2px solid #ddd;
  border-radius: 8px;
  background: #fff;
  color: #111;
  font-family: inherit;
  font-size: 21.3px;
}

.range-btn.active {
  border-color: #2196f3;
  background: #2196f3;
  color: #fff;
}

.chart {
  display: block;
  margin: 22px 0 0 -9px;
  overflow: visible;
}

.legend-text,
.tick {
  font-size: 20px;
  fill: #666;
}

.axis-title {
  font-size: 20px;
  fill: #666;
}

.date-tag {
  font-size: 20px;
  font-weight: 700;
  fill: #555;
}

.reminder-head {
  margin-top: 112px;
  height: 40px;
  padding: 0 14px 0 10px;
  display: flex;
  align-items: center;
  gap: 20px;
}

.reminder-title {
  margin: 0;
  font-size: 32px;
  font-weight: 700;
  color: #333;
}

.reminder-tools {
  margin-left: auto;
  display: flex;
  align-items: center;
  gap: 38px;
}

.reminder-table {
  margin-top: 44px;
  width: 1457px;
  table-layout: fixed;
  border-collapse: collapse;
  border-top: 2px solid #ddd;
  font-size: 23.6px;
  text-align: center;
  color: #333;
}

.reminder-table th,
.reminder-table td {
  border: 2px solid #eeeeee;
  padding: 0;
}

.reminder-table th {
  height: 64px;
  font-weight: 400;
  color: #666;
}

.reminder-table td {
  height: 52px;
}

.sev {
  font-weight: 700;
}

.sev.medium {
  background: #fef9e0;
  color: #cfa208;
}

.sev.critical {
  background: #fde0e2;
  color: #cc0000;
}

.bin {
  display: block;
  margin: 4px auto 0;
}

.scrollbar {
  width: 26px;
  flex: none;
  margin-left: 30px;
  box-sizing: border-box;
  padding: 9px 4px 8px;
  background: #fcfcfc;
  display: flex;
  flex-direction: column;
  align-items: center;
}

.arrow {
  width: 17px;
  height: 12px;
  flex: none;
  background: #8c8c8c;
}

.arrow.up {
  clip-path: polygon(50% 0, 100% 100%, 0 100%);
}

.arrow.down {
  margin-top: auto;
  clip-path: polygon(0 0, 100% 0, 50% 100%);
}

.thumb {
  width: 17px;
  height: 1725px;
  margin-top: 12px;
  border-radius: 9px;
  background: #8c8c8c;
}

.footer {
  height: 46px;
  flex: none;
  display: flex;
  align-items: center;
  justify-content: flex-end;
  box-sizing: border-box;
  padding: 4px 14px 0 0;
  font-size: 23px;
  color: #222;
}

.footer svg {
  margin: 0 4px 0 26px;
}

.brand {
  font-size: 20px;
  letter-spacing: -1.2px;
  color: #333;
}
</style>

<style>
body {
  margin: 0;
}
</style>
